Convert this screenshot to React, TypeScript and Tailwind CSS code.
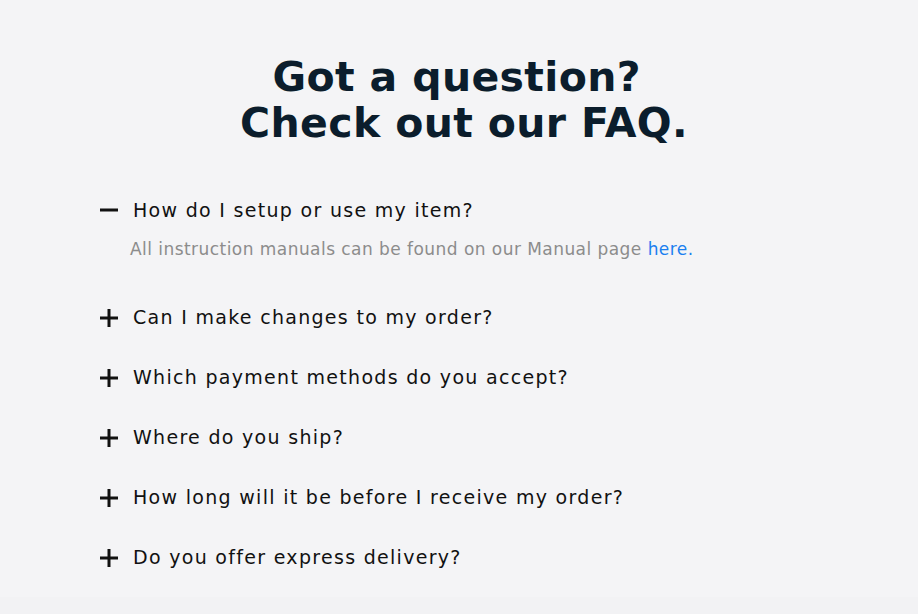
import React, { useState } from "react";

const faqs = [
  {
    q: "How do I setup or use my item?",
    a: "All instruction manuals can be found on our Manual page",
  },
  { q: "Can I make changes to my order?", a: "" },
  { q: "Which payment methods do you accept?", a: "" },
  { q: "Where do you ship?", a: "" },
  { q: "How long will it be before I receive my order?", a: "" },
  { q: "Do you offer express delivery?", a: "" },
];

const Sign = ({ open }: { open: boolean }) => (
  <svg width="18" height="18" viewBox="0 0 18 18" className="shrink-0">
    <rect x="0" y="7.5" width="18" height="3" fill="#111" />
    {!open && <rect x="7.5" y="0" width="3" height="18" fill="#111" />}
  </svg>
);

const App = () => {
  const [openIdx, setOpenIdx] = useState<number>(0);

  return (
    <main className="min-h-screen w-full flex flex-col bg-[#f2f2f4] font-['DejaVu_Sans',sans-serif]">
      <section className="flex flex-col h-[597px] pt-[54px] bg-[#f4f4f6]">
        <h2 className="pl-[10px] text-center text-[41px] leading-[46px] tracking-[0.35px] font-bold text-[#0b1d2c]">
          Got a question?&nbsp;
          <br />
          Check out our FAQ.
        </h2>

        <ul className="flex flex-col mt-[34px] pl-[100px]">
          {faqs.map((f, i) => (
            <li key={f.q} className="flex flex-col">
              <button
                onClick={() => setOpenIdx(openIdx === i ? -1 : i)}
                className="flex items-center gap-[15px] h-[60px] text-left text-[19px] tracking-[1.3px] text-[#111]"
              >
                <Sign open={openIdx === i} />
                <span>{f.q}</span>
              </button>
              {openIdx === i && f.a && (
                <p className="pl-[30px] -mt-[3px] mb-[25px] text-[17px] tracking-[0.45px] text-[#8c8c8c]">
                  {f.a} <a className="text-[#1b7ff0]">here.</a>
                </p>
              )}
            </li>
          ))}
        </ul>
      </section>
    </main>
  );
};

export default App;
